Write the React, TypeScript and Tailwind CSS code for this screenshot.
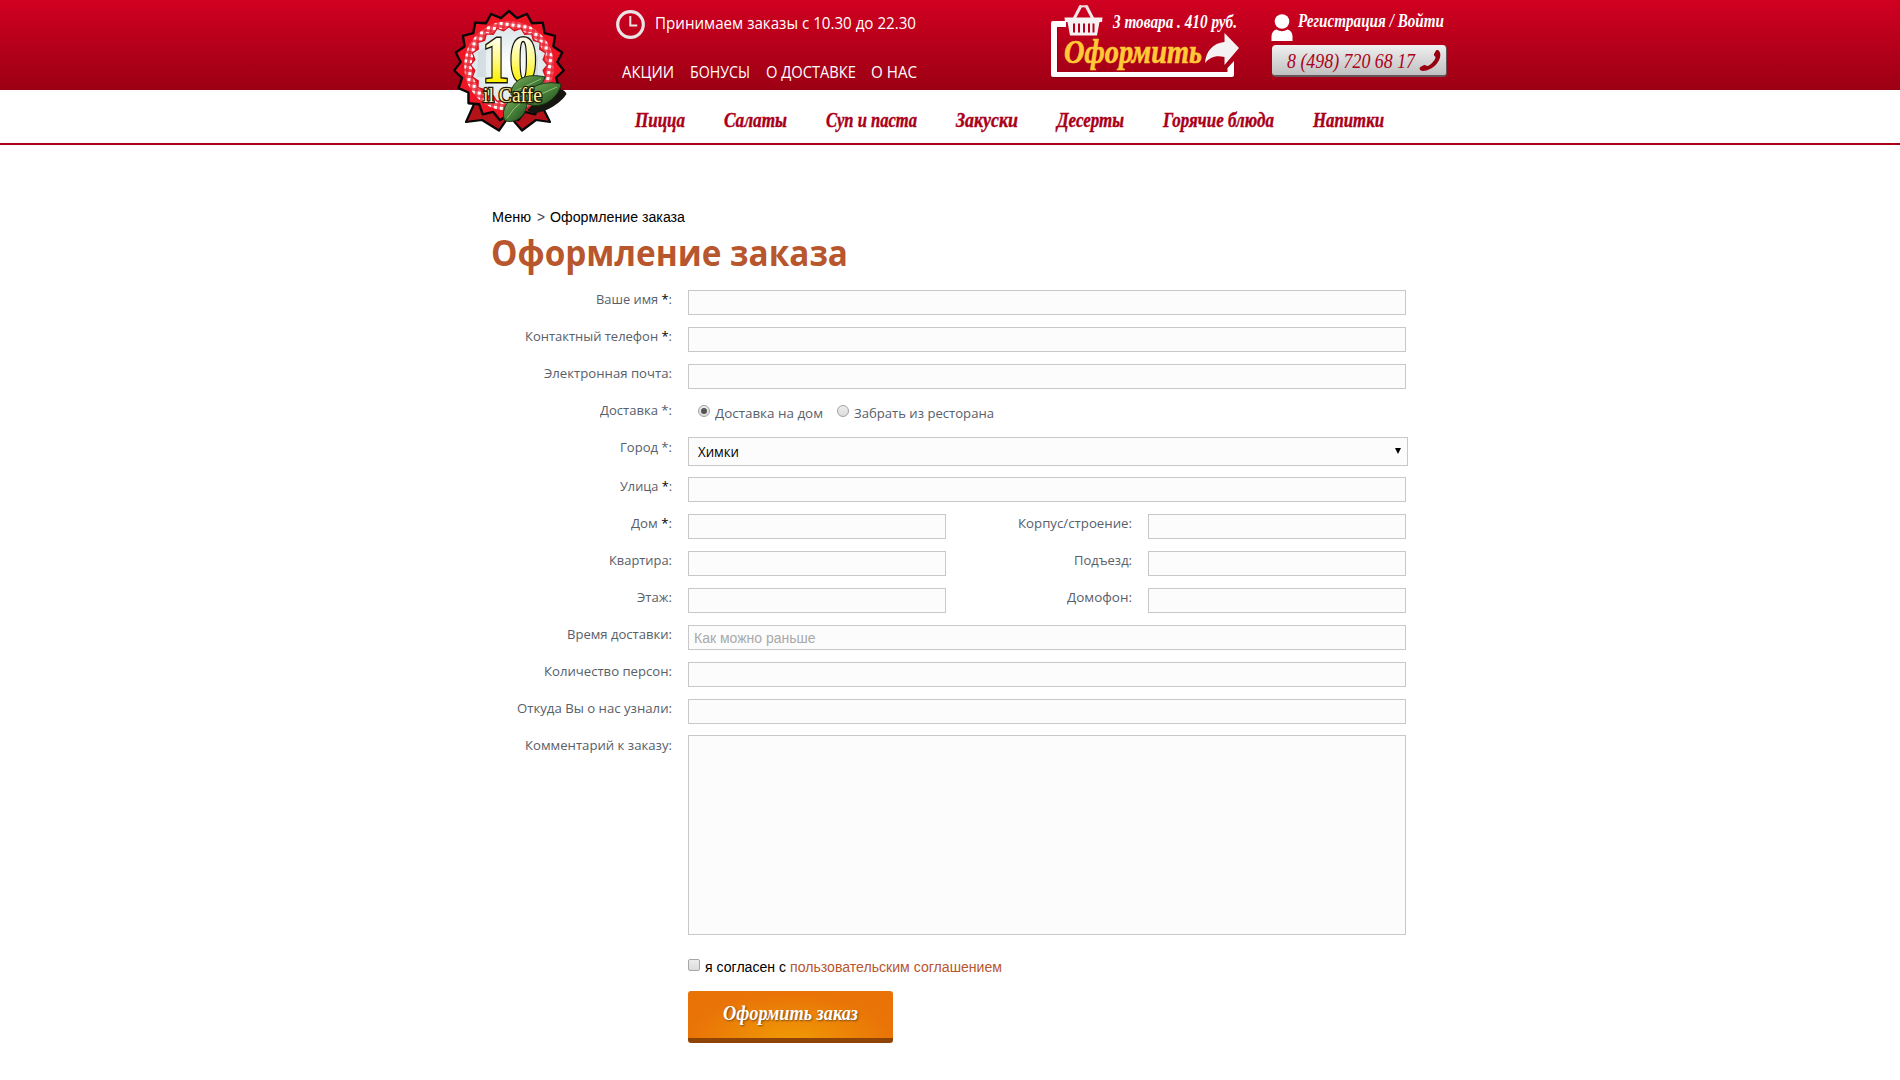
import { useLayoutEffect, useRef } from "react";
import type { ReactNode } from "react";

/** Text squeezed or stretched horizontally to fill the width of its box. */
function Fit({ className, children }: { className: string; children: ReactNode }) {
  const outer = useRef<HTMLSpanElement>(null);
  const inner = useRef<HTMLSpanElement>(null);
  useLayoutEffect(() => {
    if (outer.current && inner.current) {
      const ratio = outer.current.clientWidth / inner.current.getBoundingClientRect().width;
      inner.current.style.transform = `scaleX(${ratio})`;
    }
  }, []);
  return (
    <span ref={outer} className={`block shrink-0 whitespace-nowrap ${className}`}>
      <span ref={inner} className="inline-block origin-left align-top">
        {children}
      </span>
    </span>
  );
}

const script = "font-['Liberation_Serif',serif] font-bold italic";
const sans = "font-['Open_Sans',sans-serif]";

function starPoints(cx: number, cy: number, outerR: number, innerR: number, n: number) {
  const pts: string[] = [];
  for (let i = 0; i < n * 2; i++) {
    const r = i % 2 === 0 ? outerR : innerR;
    const a = (Math.PI * i) / n - Math.PI / 2;
    pts.push(`${(cx + r * Math.cos(a)).toFixed(1)},${(cy + r * Math.sin(a)).toFixed(1)}`);
  }
  return pts.join(" ");
}

function Logo() {
  return (
    <svg className="absolute top-[8px] left-[2px]" width="118" height="128" viewBox="452 8 118 128">
      <defs>
        <pattern id="check" width="6" height="6" patternUnits="userSpaceOnUse" patternTransform="rotate(8)">
          <rect width="6" height="6" fill="#f0505c" />
          <rect width="3" height="3" fill="#fff" />
          <rect x="3" y="3" width="3" height="3" fill="#e8303f" />
        </pattern>
        <linearGradient id="gold" x1="0" y1="0" x2="0" y2="1">
          <stop offset="0.2" stopColor="#fffff4" />
          <stop offset="0.5" stopColor="#fffa8a" />
          <stop offset="0.8" stopColor="#fdf000" />
        </linearGradient>
        <linearGradient id="leaf" x1="0" y1="0" x2="1" y2="1">
          <stop offset="0" stopColor="#7fae5c" />
          <stop offset="0.5" stopColor="#47803a" />
          <stop offset="1" stopColor="#1d4a1b" />
        </linearGradient>
        <radialGradient id="plate">
          <stop offset="0" stopColor="#ffffff" />
          <stop offset="1" stopColor="#dbe6ea" />
        </radialGradient>
      </defs>
      <g fill="#b31218" stroke="#080808" strokeWidth="2.2" strokeLinejoin="round">
        <path d="M475 102 L466 122 L482 120 L499 130.500 L512 112Z" />
        <path d="M540 102 L550 122 L536 120 L522 130.500 L506 112Z" />
      </g>
      <polygon points={starPoints(509, 66, 55, 48.5, 19)} fill="#ee1624" stroke="#080808" strokeWidth="2.4" strokeLinejoin="round" />
      <circle cx="509" cy="66" r="41" fill="none" stroke="url(#check)" strokeWidth="7.5" />
      <polygon points={starPoints(509, 65, 38.5, 34.5, 20)} fill="url(#plate)" stroke="#d41220" strokeWidth="1.2" />
      <path d="M478 52l8 -5v30h-9zM530 50l8 6v22h-8z" fill="#bcc9cc" opacity=".4" />
      <text
        x="482"
        y="82"
        textLength="55"
        lengthAdjust="spacingAndGlyphs"
        className="font-['Liberation_Serif',serif] text-[67px] font-bold"
        fill="url(#gold)"
        stroke="#18180c"
        strokeWidth="3"
        paintOrder="stroke"
      >
        10
      </text>
      <path d="M527 110 C535 119 560 105 566.500 94 C564 87 553 88 547 91Z" fill="#17150f" />
      <g fill="url(#leaf)" stroke="#173615" strokeWidth="1">
        <path d="M511 91 C515 78 528 73 545 77 C542 89 524 98 511 95Z" />
        <path d="M523 101 C527 86 544 80 561 84 C559 99 538 113 523 101Z" />
        <path d="M504 119 C501 104 512 95 527 98 C529 113 518 124 506 121Z" />
      </g>
      <g fill="none" stroke="#a9cd85" strokeWidth=".8">
        <path d="M515 91 Q526 86 541 79" />
        <path d="M527 99 Q542 94 557 87" />
        <path d="M507 118 Q513 108 524 100" />
      </g>
      <text
        x="483"
        y="102"
        textLength="59"
        lengthAdjust="spacingAndGlyphs"
        className="font-['Liberation_Serif',serif] text-[20px]"
        fill="#fff2a0"
        stroke="#1d1a08"
        strokeWidth="2.6"
        paintOrder="stroke"
      >
        il Caffe
      </text>
    </svg>
  );
}

function Clock() {
  return (
    <svg className="shrink-0" width="29" height="29" viewBox="0 0 29 29" fill="none" stroke="#e9e4e6">
      <circle cx="14.5" cy="14.5" r="12.8" strokeWidth="3.2" />
      <path d="M14.3 6v9.5h7" strokeWidth="2" />
    </svg>
  );
}

function Cart() {
  return (
    <div className="relative h-[90px] w-[190px] shrink-0 text-white">
      <svg className="absolute top-0 left-0" width="190" height="90" viewBox="1050 0 190 90">
        <path d="M1063 24H1054V74.5H1230.500V64" fill="none" stroke="#7c0010" strokeOpacity=".5" strokeWidth="6" transform="translate(1 1)" />
        <path d="M1051 23a2 2 0 0 1 2-2H1066V27H1057V72H1227.500V68L1234 61V75a2 2 0 0 1-2 2H1053a2 2 0 0 1-2-2Z" fill="#fff" />
        <path d="M1074.500 18L1080.500 6.500M1092.500 18L1086.500 6.500" stroke="#f4e6e9" strokeWidth="3" strokeLinecap="round" />
        <path d="M1079 7.500q4.500-2.500 9 0" stroke="#eedde0" strokeWidth="2" fill="none" />
        <path d="M1064.500 17.500H1102.500L1102 22H1099.500L1097 35.500H1070L1067.500 22H1065Z" fill="#f6f1f2" />
        <path d="M1074 23.500v9M1079 23.500v9M1084 23.500v9M1089 23.500v9M1093.500 23.500v9" stroke="#b8001c" strokeWidth="2" />
        <path d="M1224.500 33L1239 48L1224.500 65V57C1216 55 1210 57 1205 63C1206 51 1213 43 1224.500 42Z" fill="#f4f2f3" />
      </svg>
      <Fit className={`absolute top-[9px] left-[63px] w-[124px] text-[18px] leading-[26px] ${script}`}>3 товара . 410 руб.</Fit>
      <Fit className={`absolute top-[33px] left-[14px] w-[138px] text-[33px] leading-[38px] text-[#ffc937] [-webkit-text-stroke:0.6px_#ffc937] ${script}`}>Оформить</Fit>
    </div>
  );
}

function Account() {
  return (
    <div className="ml-[31px] w-[176px] shrink-0 pt-[13px]">
      <div className="flex h-[32px]">
        <svg className="shrink-0" width="22" height="29" viewBox="0 0 22 29" fill="#fff">
          <circle cx="11" cy="8.500" r="7.300" />
          <path d="M0.500 28V23Q1 17.500 5.500 16.500Q11 20 16.500 16.500Q21 17.500 21.500 23V28Z" />
        </svg>
        <Fit className={`-mt-[5px] ml-[5px] w-[146px] text-[18px] leading-[26px] text-white ${script}`}>Регистрация / Войти</Fit>
      </div>
      <div className="ml-px flex h-[32px] w-[175px] items-center rounded-[4px] border-r border-b-2 border-[#66575a] bg-gradient-to-b from-[#f0f0f0] to-[#c0c0c0] pl-[15px]">
        <Fit className="mt-[2px] w-[128px] font-['Liberation_Serif',serif] text-[20px] leading-[30px] text-[#aa0019] italic">8 (498) 720 68 17</Fit>
        <svg className="mt-px ml-[3px] shrink-0" width="24" height="23" viewBox="0 0 24 23">
          <path
            d="M18 1.500C20 0 22 2 22.300 5C23 12 15 21.500 5 22C2 22 1 20 2 18.300L6 16C8 15.500 8.500 17.500 10 17C13 15.500 17 11.500 17.500 8.500C17.500 7 15.500 7 16 5Z"
            fill="#98000f"
          />
        </svg>
      </div>
    </div>
  );
}

function Header() {
  return (
    <header>
      <div className="h-[90px] bg-gradient-to-b from-[#d10021] to-[#9c0014]">
        <div className="relative mx-auto flex w-[1000px]">
          <Logo />
          <div className={`ml-[166px] w-[434px] shrink-0 pt-[10px] text-white ${sans}`}>
            <div className="flex h-[29px]">
              <Clock />
              <Fit className="ml-[10px] w-[261px] text-[15.5px] leading-[26px]">Принимаем заказы с 10.30 до 22.30</Fit>
            </div>
            <div className="mt-[20px] ml-[6px] flex text-[15.5px] leading-[26px]">
              <Fit className="w-[52px]">АКЦИИ</Fit>
              <Fit className="ml-[16px] w-[60px]">БОНУСЫ</Fit>
              <Fit className="ml-[16px] w-[90px]">О ДОСТАВКЕ</Fit>
              <Fit className="ml-[15px] w-[46px]">О НАС</Fit>
            </div>
          </div>
          <Cart />
          <Account />
        </div>
      </div>
      <nav className="h-[55px] border-b-2 border-[#aa0019]">
        <div className={`mx-auto flex w-[1000px] gap-[39px] pt-[17px] pl-[185px] text-[20px] leading-[26px] text-[#aa0019] [-webkit-text-stroke:0.4px_#aa0019] ${script}`}>
          <Fit className="w-[50px]">Пицца</Fit>
          <Fit className="w-[63px]">Салаты</Fit>
          <Fit className="w-[91px]">Суп и паста</Fit>
          <Fit className="w-[62px]">Закуски</Fit>
          <Fit className="w-[67px]">Десерты</Fit>
          <Fit className="w-[111px]">Горячие блюда</Fit>
          <Fit className="w-[71px]">Напитки</Fit>
        </div>
      </nav>
    </header>
  );
}

function Label({ width, children, className = "w-[180px]" }: { width: string; children: ReactNode; className?: string }) {
  return (
    <div className={`flex shrink-0 justify-end text-[13.5px] leading-[18px] text-[#58606a] ${sans} ${className}`}>
      <Fit className={width}>{children}</Fit>
    </div>
  );
}

const box = "block shrink-0 rounded-none border border-[#c8c8c8] bg-[#fcfcfc] outline-none";
const Star = () => <span className="text-black">*</span>;

function Row({ width, label, placeholder }: { width: string; label: ReactNode; placeholder?: string }) {
  return (
    <div className="flex h-[37px] gap-[16px]">
      <Label width={width}>{label}</Label>
      <input
        className={`${box} h-[25px] w-[718px] px-[5px] font-['Liberation_Sans',sans-serif] text-[14px] placeholder:text-[#a9a9a9]`}
        placeholder={placeholder}
      />
    </div>
  );
}

function PairRow(props: { leftWidth: string; left: ReactNode; rightWidth: string; right: ReactNode }) {
  return (
    <div className="flex h-[37px] gap-[16px]">
      <Label width={props.leftWidth}>{props.left}</Label>
      <input className={`${box} h-[25px] w-[258px]`} />
      <Label width={props.rightWidth} className="w-[170px]">
        {props.right}
      </Label>
      <input className={`${box} h-[25px] w-[258px]`} />
    </div>
  );
}

function Radio({ checked = false }: { checked?: boolean }) {
  return (
    <span className="mt-px flex h-[12px] w-[12px] shrink-0 items-center justify-center rounded-full border border-[#a2a2a2] bg-gradient-to-b from-[#ededed] to-[#dcdcdc]">
      {checked && <span className="h-[6px] w-[6px] rounded-full bg-[#555]" />}
    </span>
  );
}

export default function App() {
  return (
    <div className="h-[1080px] w-[1900px] overflow-hidden bg-white">
      <Header />
      <main className="mx-auto w-[916px] pt-[63px] font-['Liberation_Sans',sans-serif] text-[14px] text-black">
        <div className="flex h-[18px] leading-[18px]">
          <Fit className="w-[39px]">Меню</Fit>
          <Fit className="ml-[6px] w-[8px] text-[#444]">&gt;</Fit>
          <Fit className="ml-[5px] w-[135px]">Оформление заказа</Fit>
        </div>
        <h1 className={`mt-[3px] -ml-px h-[61px] text-[35.5px] leading-[46px] font-bold text-[#b8562d] ${sans}`}>
          <Fit className="w-[357px]">Оформление заказа</Fit>
        </h1>
        <form>
          <Row width="w-[76px]" label={<>Ваше имя <Star />:</>} />
          <Row width="w-[147px]" label={<>Контактный телефон <Star />:</>} />
          <Row width="w-[128px]" label="Электронная почта:" />
          <div className="flex h-[37px] gap-[16px]">
            <Label width="w-[72px]">Доставка *:</Label>
            <div className={`flex pt-[3px] pl-[10px] text-[13.5px] leading-[18px] text-[#58606a] ${sans}`}>
              <Radio checked />
              <Fit className="ml-[5px] w-[108px]">Доставка на дом</Fit>
              <span className="w-[14px]" />
              <Radio />
              <Fit className="ml-[5px] w-[140px]">Забрать из ресторана</Fit>
            </div>
          </div>
          <div className="flex h-[39px] gap-[16px]">
            <Label width="w-[52px]">Город *:</Label>
            <div className={`${box} -mt-px flex! h-[29px] w-[720px] items-center justify-between pr-[6px] pl-[9px] ${sans}`}>
              <Fit className="w-[41px] text-[14px] leading-[27px]">Химки</Fit>
              <svg className="-mt-[2px]" width="6" height="6" viewBox="0 0 6 6">
                <path d="M0 0H6L3 6Z" fill="#000" />
              </svg>
            </div>
          </div>
          <Row width="w-[52px]" label={<>Улица <Star />:</>} />
          <PairRow leftWidth="w-[41px]" left={<>Дом <Star />:</>} rightWidth="w-[114px]" right="Корпус/строение:" />
          <PairRow leftWidth="w-[63px]" left="Квартира:" rightWidth="w-[58px]" right="Подъезд:" />
          <PairRow leftWidth="w-[35px]" left="Этаж:" rightWidth="w-[65px]" right="Домофон:" />
          <Row width="w-[105px]" label="Время доставки:" placeholder="Как можно раньше" />
          <Row width="w-[128px]" label="Количество персон:" />
          <Row width="w-[155px]" label="Откуда Вы о нас узнали:" />
          <div className="flex gap-[16px]">
            <Label width="w-[147px]">Комментарий к заказу:</Label>
            <textarea className={`${box} -mt-px h-[200px] w-[718px] resize-none`} />
          </div>
          <div className="mt-[23px] ml-[196px] flex h-[33px] leading-[18px]">
            <span className="mt-px h-[12px] w-[12px] shrink-0 rounded-[2px] border border-[#a6a6a6] bg-gradient-to-b from-[#ededed] to-[#dcdcdc]" />
            <Fit className="ml-[5px] w-[81px]">я согласен с</Fit>
            <Fit className="ml-[4px] w-[212px] text-[#b8562d]">пользовательским соглашением</Fit>
          </div>
          <button
            type="button"
            className={`ml-[196px] flex h-[52px] w-[205px] items-start justify-center rounded-[3px] border-b-5 border-[#8f4407] bg-[radial-gradient(ellipse_50%_100%_at_50%_105%,#f09a05_0%,#e97307_100%)] pt-[9px] text-[20px] leading-[26px] text-white [text-shadow:1px_1px_2px_#7a4a18] ${script}`}
          >
            <Fit className="w-[135px]">Оформить заказ</Fit>
          </button>
        </form>
      </main>
    </div>
  );
}
